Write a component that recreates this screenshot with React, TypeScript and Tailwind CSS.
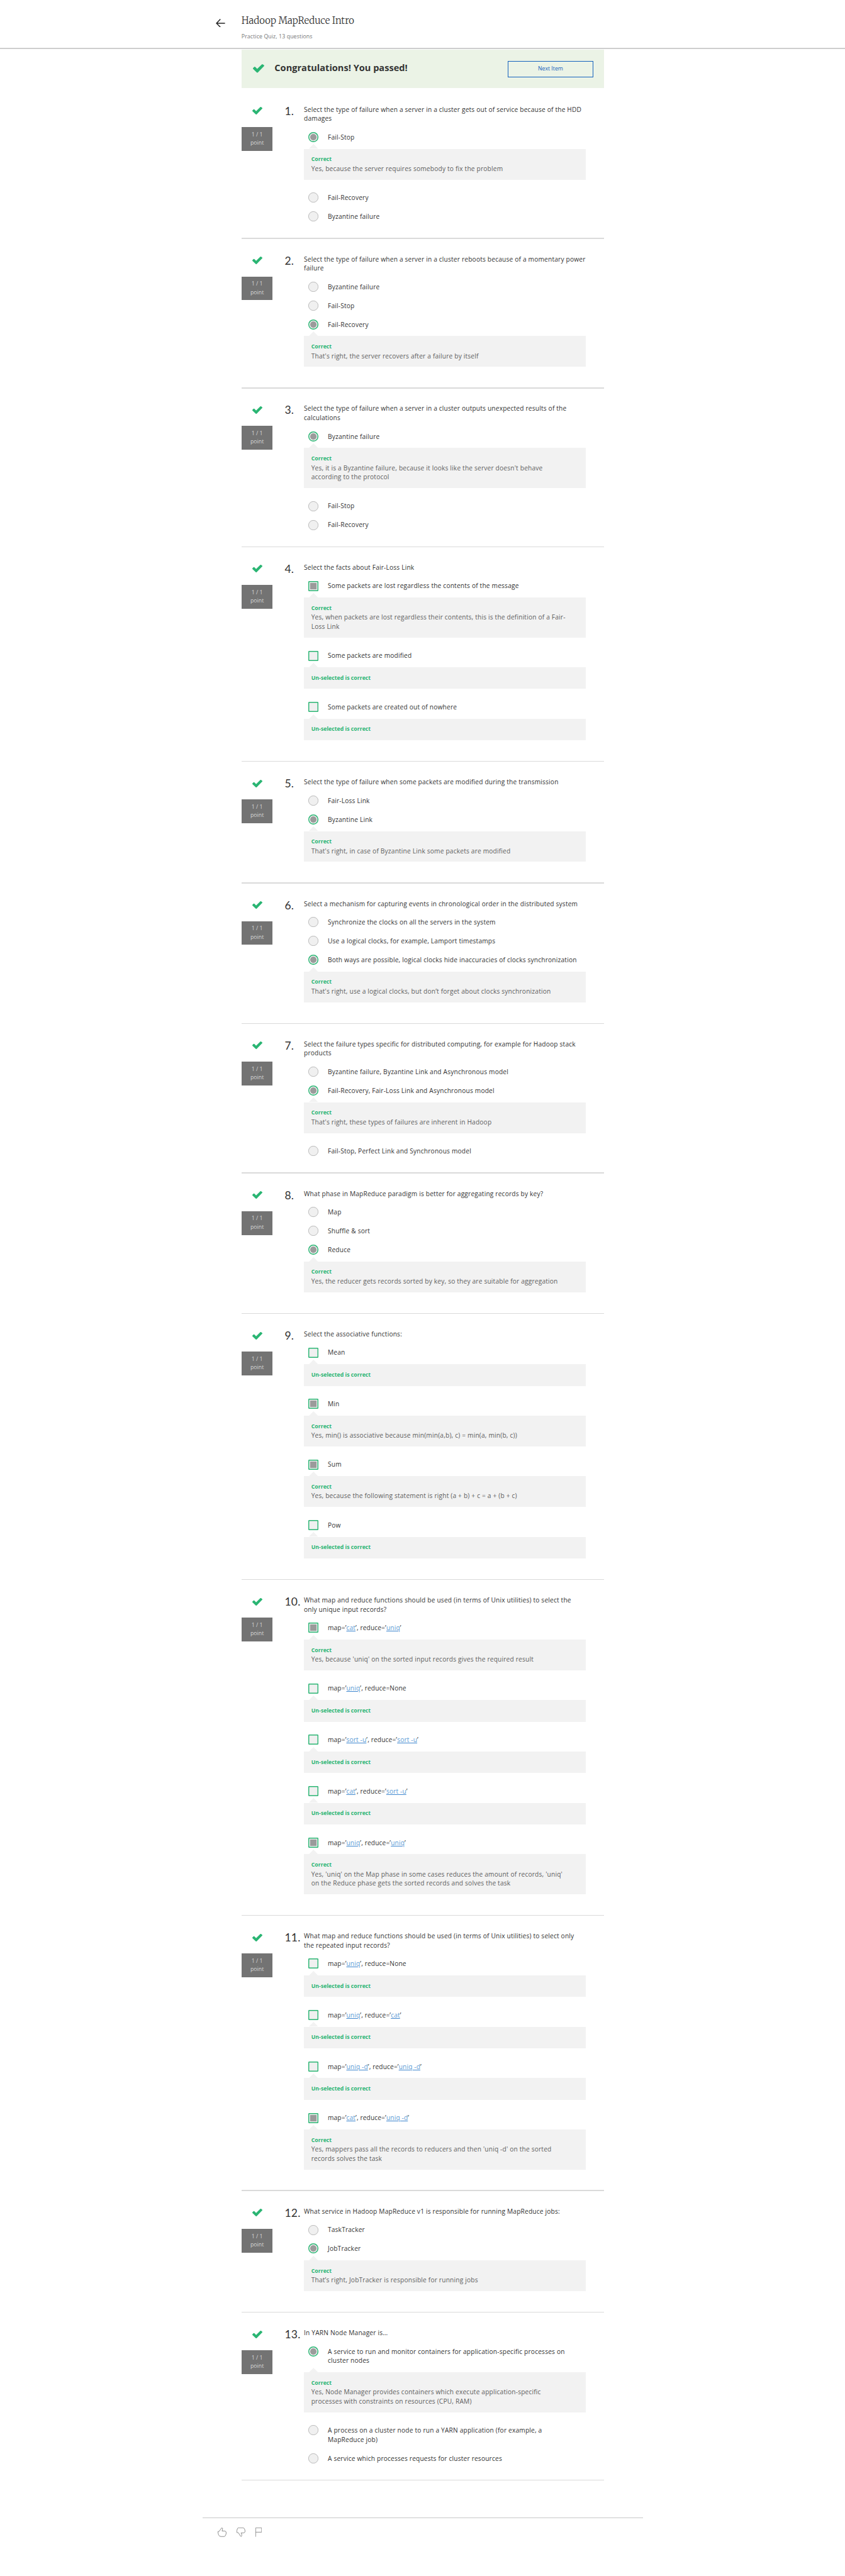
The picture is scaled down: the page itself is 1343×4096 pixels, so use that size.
import React from "react";

type Option = {
  text: React.ReactNode;
  on?: boolean;
  note?: string;
  unselected?: boolean;
};
type Question = { text: React.ReactNode; box?: boolean; options: Option[] };

const L = ({ children }: { children: React.ReactNode }) => (
  <a className="text-[#5b9bd5] underline decoration-[#3f87cf] decoration-1 underline-offset-2">{children}</a>
);
const Pair = ({ m, r }: { m: string; r?: string }) => (
  <span className="tracking-[0.16px]">
    map=’<L>{m}</L>’, reduce={r ? <>’<L>{r}</L>’</> : "None"}
  </span>
);

const questions: Question[] = [
  {
    text: <>Select the type of failure when a server in a cluster gets out of service because of the HDD<br />damages</>,
    options: [
      { text: "Fail-Stop", on: true, note: "Yes, because the server requires somebody to fix the problem" },
      { text: "Fail-Recovery" },
      { text: "Byzantine failure" },
    ],
  },
  {
    text: <>Select the type of failure when a server in a cluster reboots because of a momentary power<br />failure</>,
    options: [
      { text: "Byzantine failure" },
      { text: "Fail-Stop" },
      { text: "Fail-Recovery", on: true, note: "That's right, the server recovers after a failure by itself" },
    ],
  },
  {
    text: <>Select the type of failure when a server in a cluster outputs unexpected results of the<br />calculations</>,
    options: [
      { text: "Byzantine failure", on: true, note: "Yes, it is a Byzantine failure, because it looks like the server doesn't behave\naccording to the protocol" },
      { text: "Fail-Stop" },
      { text: "Fail-Recovery" },
    ],
  },
  {
    text: "Select the facts about Fair-Loss Link",
    box: true,
    options: [
      { text: "Some packets are lost regardless the contents of the message", on: true, note: "Yes, when packets are lost regardless their contents, this is the definition of a Fair-\nLoss Link" },
      { text: "Some packets are modified", unselected: true },
      { text: "Some packets are created out of nowhere", unselected: true },
    ],
  },
  {
    text: "Select the type of failure when some packets are modified during the transmission",
    options: [
      { text: "Fair-Loss Link" },
      { text: "Byzantine Link", on: true, note: "That's right, in case of Byzantine Link some packets are modified" },
    ],
  },
  {
    text: "Select a mechanism for capturing events in chronological order in the distributed system",
    options: [
      { text: "Synchronize the clocks on all the servers in the system" },
      { text: "Use a logical clocks, for example, Lamport timestamps" },
      { text: "Both ways are possible, logical clocks hide inaccuracies of clocks synchronization", on: true, note: "That's right, use a logical clocks, but don’t forget about clocks synchronization" },
    ],
  },
  {
    text: <>Select the failure types specific for distributed computing, for example for Hadoop stack<br />products</>,
    options: [
      { text: "Byzantine failure, Byzantine Link and Asynchronous model" },
      { text: "Fail-Recovery, Fair-Loss Link and Asynchronous model", on: true, note: "That's right, these types of failures are inherent in Hadoop" },
      { text: "Fail-Stop, Perfect Link and Synchronous model" },
    ],
  },
  {
    text: "What phase in MapReduce paradigm is better for aggregating records by key?",
    options: [
      { text: "Map" },
      { text: "Shuffle & sort" },
      { text: "Reduce", on: true, note: "Yes, the reducer gets records sorted by key, so they are suitable for aggregation" },
    ],
  },
  {
    text: "Select the associative functions:",
    box: true,
    options: [
      { text: "Mean", unselected: true },
      { text: "Min", on: true, note: "Yes, min() is associative because min(min(a,b), c) = min(a, min(b, c))" },
      { text: "Sum", on: true, note: "Yes, because the following statement is right (a + b) + c = a + (b + c)" },
      { text: "Pow", unselected: true },
    ],
  },
  {
    text: <>What map and reduce functions should be used (in terms of Unix utilities) to select the<br />only unique input records?</>,
    box: true,
    options: [
      { text: <Pair m="cat" r="uniq" />, on: true, note: "Yes, because 'uniq' on the sorted input records gives the required result" },
      { text: <Pair m="uniq" />, unselected: true },
      { text: <Pair m="sort -u" r="sort -u" />, unselected: true },
      { text: <Pair m="cat" r="sort -u" />, unselected: true },
      { text: <Pair m="uniq" r="uniq" />, on: true, note: "Yes, 'uniq' on the Map phase in some cases reduces the amount of records, 'uniq'\non the Reduce phase gets the sorted records and solves the task" },
    ],
  },
  {
    text: <>What map and reduce functions should be used (in terms of Unix utilities) to select only<br />the repeated input records?</>,
    box: true,
    options: [
      { text: <Pair m="uniq" />, unselected: true },
      { text: <Pair m="uniq" r="cat" />, unselected: true },
      { text: <Pair m="uniq -d" r="uniq -d" />, unselected: true },
      { text: <Pair m="cat" r="uniq -d" />, on: true, note: "Yes, mappers pass all the records to reducers and then 'uniq -d' on the sorted\nrecords solves the task" },
    ],
  },
  {
    text: "What service in Hadoop MapReduce v1 is responsible for running MapReduce jobs:",
    options: [
      { text: "TaskTracker" },
      { text: "JobTracker", on: true, note: "That’s right, JobTracker is responsible for running jobs" },
    ],
  },
  {
    text: "In YARN Node Manager is…",
    options: [
      { text: <>A service to run and monitor containers for application-specific processes on<br />cluster nodes</>, on: true, note: "Yes, Node Manager provides containers which execute application-specific\nprocesses with constraints on resources (CPU, RAM)" },
      { text: <>A process on a cluster node to run a YARN application (for example, a<br />MapReduce job)</> },
      { text: "A service which processes requests for cluster resources" },
    ],
  },
];

const Check = ({ className }: { className: string }) => (
  <svg viewBox="0 0 22 17" className={className} fill="#2ab573">
    <path d="M21.6 3.9 9.6 16.2a1.5 1.5 0 0 1-2.1 0L.5 9.6a1.5 1.5 0 0 1 0-2.1l2-2a1.5 1.5 0 0 1 2.1 0l3.7 3.6L17.3.5a1.5 1.5 0 0 1 2.1 0l2.1 1.4a1.5 1.5 0 0 1 .1 2z" />
  </svg>
);

function Mark({ box, on, good }: { box?: boolean; on?: boolean; good: boolean }) {
  const stroke = good ? "#2ab573" : "#a6a6a6";
  const w = good ? 2 : 1;
  return (
    <svg viewBox="0 0 22 22" className="-my-px size-[22px] shrink-0">
      {box ? (
        <rect x="1" y="1" width="20" height="20" rx="1" fill="#f0f0f0" stroke={stroke} strokeWidth={w} />
      ) : (
        <circle cx="11" cy="11" r={11 - w / 2} fill="#f0f0f0" stroke={stroke} strokeWidth={w} />
      )}
      {on && (box ? <rect x="4" y="4" width="14" height="14" fill="#9b9b9b" /> : <circle cx="11" cy="11" r="7" fill="#9b9b9b" />)}
    </svg>
  );
}

function Item({ o, box }: { o: Option; box?: boolean }) {
  const feedback = o.note || o.unselected;
  return (
    <li>
      <div className="flex items-start gap-5 py-[10.5px] pl-[10px]">
        <Mark box={box} on={o.on} good={!!feedback} />
        <span className="whitespace-nowrap">{o.text}</span>
      </div>
      {feedback && (
        <div className="relative mt-[5px] mb-[19px] w-[614px] bg-[#f2f2f2] px-4 pt-[13px] pb-[14px] text-[#5e5e5e]">
          <svg viewBox="0 0 20 10" className="absolute -top-[10px] left-[11px] h-[10px] w-5" fill="#f2f2f2">
            <path d="M0 10 10 0l10 10z" />
          </svg>
          <div className="text-[12px] leading-5 font-bold tracking-normal text-[#2ab573]">
            {o.unselected ? "Un-selected is correct" : "Correct"}
          </div>
          {o.note && <p className="whitespace-pre">{o.note}</p>}
        </div>
      )}
    </li>
  );
}

export default function App() {
  return (
    <div className="h-[5613px] w-[1840px] overflow-hidden bg-white font-['Open_Sans',sans-serif] text-[14px] leading-5 text-[#333] [zoom:0.7297]">
      <header className="flex h-[104.5px] pt-[33.5px] pl-[470.5px]">
        <svg viewBox="0 0 20 19" className="mt-[7px] mr-[35.5px] h-[19px] w-5" fill="none" stroke="#222" strokeWidth="2">
          <path d="M20 9.500H1.500M10 .8 1.500 9.500 10 18.200" />
        </svg>
        <div>
          <h1 className="font-['Merriweather','Noto_Serif','Liberation_Serif',serif] text-[20.5px] leading-[26px] font-light">Hadoop MapReduce Intro</h1>
          <p className="mt-[11.7px] text-[12px] leading-[18px] tracking-[0.15px] text-[#757575]">Practice Quiz, 13 questions</p>
        </div>
      </header>
      <div className="h-[2px] bg-[#cdcdcd]" />
      <main className="ml-[526px] w-[790px]">
        <div className="mt-0.5 mb-0.5 flex h-[84px] items-center bg-[#ebf3e6] pr-6 pl-[25.5px]">
          <Check className="-mt-[3px] mr-[22px] h-[19px] w-[24.5px]" />
          <h2 className="-mt-2 flex-1 text-[20px] font-bold">Congratulations! You passed!</h2>
          <button className="h-9 w-[186px] border border-[#1461bd] text-[12px] text-[#1461bd]">Next Item</button>
        </div>
        {questions.map((q, i) => (
          <section key={i}>
            <div className="flex pt-[34px] pb-[26px]">
              <div className="flex h-0 w-[68px] shrink-0 flex-col items-center">
                <Check className="mt-[5px] h-[17px] w-[22px] shrink-0" />
                <div className="mt-[26px] h-[52px] w-full shrink-0 bg-[#737373] py-2 text-center text-[12px] leading-[18px] text-[#d6d6d6]">
                  <div>1 / 1</div>
                  <div>point</div>
                </div>
              </div>
              <div className="ml-[26px] w-[42px] shrink-0 font-['Lato',sans-serif] text-[24px] leading-7 tracking-[0.3px]">{i + 1}.</div>
              <div className="min-w-0 flex-1 tracking-[0.23px]">
                <p className="mb-[10px] whitespace-nowrap">{q.text}</p>
                <ul>
                  {q.options.map((o, k) => (
                    <Item key={k} o={o} box={q.box} />
                  ))}
                </ul>
              </div>
            </div>
            <div className="h-[2px] bg-[#dadada]" />
          </section>
        ))}
      </main>
      <footer className="mt-20 ml-[441px] flex w-[960px] items-start gap-[22px] border-t border-[#c8c8c8] pt-[21px] pl-[33px]">
        <svg viewBox="0 0 19 20" className="h-5 w-[19px]" fill="none" stroke="#666" strokeWidth="1" strokeLinejoin="round">
          <path d="M.5 8.500 3.300 8.200 8.300 1q1.200-1 2.200.4.600 1-.3 3.600l-.7 2.500H15q3.500.3 3.500 3.500 0 3-1.200 5.500-1.200 3-3.300 3H7q-3.500 0-5-3.500Q.8 13 .5 8.500z" />
        </svg>
        <svg viewBox="0 0 19 20" className="h-5 w-[19px]" fill="none" stroke="#666" strokeWidth="1" strokeLinejoin="round">
          <path d="M.5 10.800Q.3 6 1.800 2.500 2.500.5 4.500.5H14q2 0 3.200 2.500 1.300 2.500 1.300 5.500-.3 3-4 3.200H9.800q1.900 3 1.500 5.300-.2 2.300-1.300 2.500-1 0-1.500-1L4 11.300z" />
        </svg>
        <svg viewBox="0 0 14 20" className="h-5 w-3.5" fill="none" stroke="#666" strokeWidth="1">
          <path d="M.5 20V.5h13v9.500H.5" />
        </svg>
      </footer>
    </div>
  );
}
